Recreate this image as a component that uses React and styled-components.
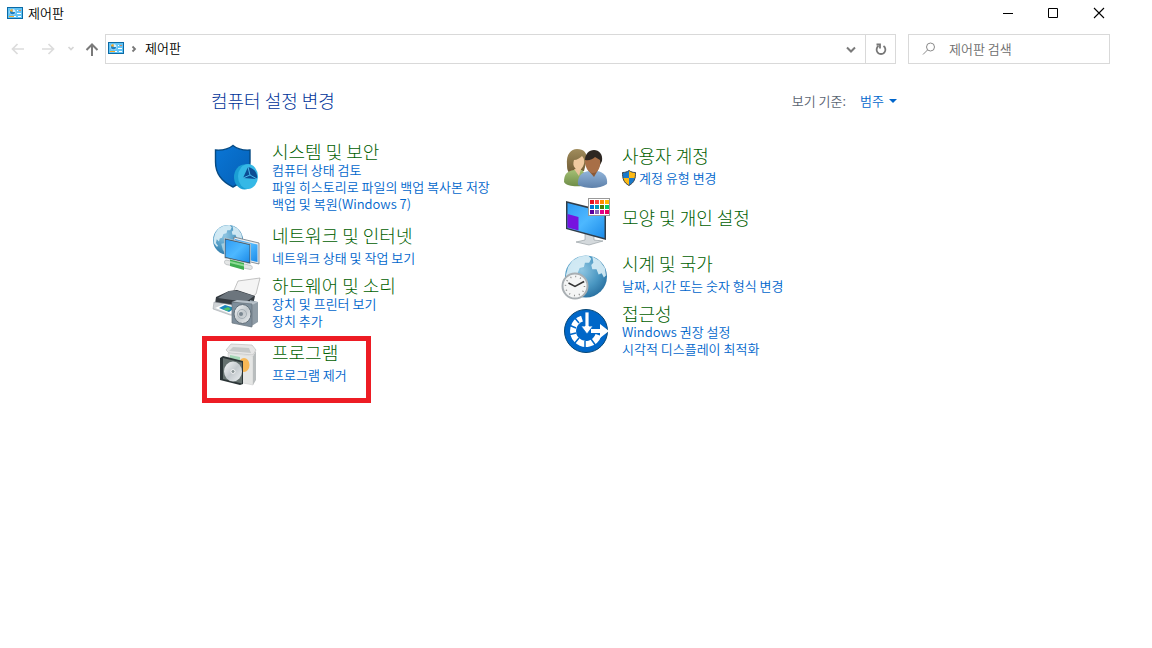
import styled, { createGlobalStyle } from "styled-components";

const GlobalStyle = createGlobalStyle`
	* {
		box-sizing: border-box;
	}
	body {
		margin: 0;
		background: #fff;
	}
	body, button, input, select {
		font-family: "Noto Sans CJK KR", "Noto Sans", sans-serif;
		font-size: 13px;
		font-weight: 350;
	}
`;

const Window = styled.div`
	min-height: 100vh;
	padding-right: 30px;
	color: #000;
`;
const TitleBar = styled.header`
	display: flex;
	align-items: center;
	height: 26px;
	padding-left: 7px;
	gap: 5px;
`;
const Title = styled.h1`
	flex: 1;
	margin: 0;
	font-size: 13px;
	font-weight: 350;
	line-height: 20px;
`;
const WindowControls = styled.div`
	display: flex;
`;
const PlainButton = styled.button`
	display: flex;
	align-items: center;
	justify-content: center;
	padding: 0;
	border: 0;
	background: none;
	width: ${(props) => props.$width}px;
	height: 26px;
`;
const Toolbar = styled.nav`
	display: flex;
	align-items: center;
	margin-top: 8px;
	padding: 0 12px 0 3px;
	height: 30px;
`;
const AddressBar = styled.div`
	display: flex;
	align-items: center;
	flex: 1;
	height: 30px;
	margin-right: 12px;
	padding-left: 2px;
	border: 1px solid #d9d9d9;
`;
const AddressIcon = styled.span`
	display: flex;
	padding-bottom: 2px;
`;
const Crumb = styled.a`
	flex: 1;
	padding-bottom: 2px;
	color: #000;
	line-height: 20px;
	text-decoration: none;
`;
const Refresh = styled(PlainButton)`
	height: 28px;
	border-left: 1px solid #d9d9d9;
`;
const SearchBox = styled.label`
	display: flex;
	align-items: center;
	width: 202px;
	height: 30px;
	padding: 0 12px;
	gap: 12px;
	border: 1px solid #d9d9d9;
`;
const SearchInput = styled.input`
	flex: 1;
	min-width: 0;
	height: 24px;
	padding: 0 0 2px;
	border: 0;
	outline: 0;
	background: none;
	&::placeholder {
		color: #6d6d6d;
		opacity: 1;
	}
`;
const Content = styled.main`
	max-width: 897px;
	padding: 23px 0 24px 211px;
`;
const ContentHeader = styled.div`
	display: flex;
	align-items: center;
	justify-content: space-between;
	height: 28px;
`;
const PageHeading = styled.h2`
	margin: 0;
	padding-bottom: 2px;
	color: #003399;
	font-size: 18px;
	font-weight: 300;
	line-height: 26px;
`;
const ViewBy = styled.label`
	display: flex;
	align-items: center;
	gap: 14px;
	color: #5a6472;
	line-height: 20px;
`;
const SelectWrap = styled.span`
	display: flex;
	align-items: center;
	gap: 5px;
`;
const ViewSelect = styled.select`
	appearance: none;
	padding: 0;
	border: 0;
	background: none;
	color: #0066cc;
	line-height: 20px;
`;
const Columns = styled.div`
	display: grid;
	grid-template-columns: 350fr 335fr;
	align-items: start;
	margin: 26px 0 0 1px;
`;
const Column = styled.div`
	display: grid;
	gap: 9px;
`;
const Category = styled.section`
	position: relative;
	display: flex;
	gap: 12px;
`;
const Picture = styled.svg`
	flex: none;
	width: 48px;
	height: 48px;
	margin-bottom: -3px;
	overflow: visible;
`;
const paddings = { none: 12, one: 4, many: 0 };
const CategoryBody = styled.div`
	display: flex;
	flex-direction: column;
	padding-top: ${(props) => paddings[props.$links]}px;
`;
const CategoryHeading = styled.h3`
	margin: 0;
	font-weight: 300;
	padding-bottom: ${(props) => (props.$links === "one" ? 4 : 0)}px;
`;
const CategoryLink = styled.a`
	display: block;
	color: #006000;
	font-size: 18px;
	line-height: 20px;
	text-decoration: none;
	white-space: nowrap;
`;
const TaskLink = styled.a`
	display: flex;
	align-items: center;
	gap: 3px;
	color: #0066cc;
	line-height: 17px;
	text-decoration: none;
	white-space: nowrap;
`;
const Highlight = styled.span`
	position: absolute;
	top: -2px;
	left: -10px;
	width: 169px;
	height: 67px;
	border: 5px solid #ed1c24;
	pointer-events: none;
`;

const PanelIcon = () => (
	<svg width="16" height="12" viewBox="0 0 16 12" aria-hidden="true">
		<rect x=".5" y=".5" width="15" height="11" fill="#63c3f4" stroke="#0b6aa5" />
		<circle cx="5.500" cy="5" r="3" fill="#d5effd" />
		<path d="M5.500 5V2.500a2.500 2.500 0 1 0 2.500 2.500z" fill="#1a7fc4" />
		<path d="M5.500 5V2A3 3 0 0 0 2.800 4z" fill="#f7a823" />
		<path d="M10 3.500h1M10 6.500h4M7 9.500h2M11 9.500h3" stroke="#fff" />
		<path d="M12 3.500h2" stroke="#d98a5b" />
		<path d="M2 9.500h5" stroke="#f7a823" />
	</svg>
);

const Glyph = ({ d, color, stroke = 1.7 }) => (
	<svg width="14" height="14" viewBox="0 0 14 14" fill="none" stroke={color} strokeWidth={stroke} aria-hidden="true">
		<path d={d} />
	</svg>
);

const Globe = ({ cx, cy, r }) => (
	<g transform={`translate(${cx} ${cy}) scale(${r / 20})`}>
		<circle r="20" fill="url(#globe)" />
		<path d="M-13-15l7-4 8-1 3 3-2 4-4 0-1 4-4 1-2 5-3 1-1 4-3-3-1 5 3 4-2 1-4-5 0-6 2-7z" fill="#dceff7" opacity=".9" />
		<path d="M6-19l7 4 5 7 1 7-2 2-2-4-3 1-2-5-4 0-1-4 2-2z" fill="#dceff7" opacity=".9" />
		<path d="M-9 5l5-1 6 4-2 5-4 5-3-5z" fill="#bcdfee" opacity=".7" />
	</g>
);

const Shield = () => (
	<svg width="14" height="16" viewBox="0 0 14 16" aria-hidden="true">
		<path d="M7 .5C5 2 3 2.500.5 2.500c0 6 1 10 6.500 13 5.500-3 6.500-7 6.500-13C11 2.500 9 2 7 .5z" fill="#1979ca" />
		<path d="M7 .5C9 2 11 2.500 13.500 2.500V8H7zM7 8H.8c.8 4 2.700 6 6.200 7.500z" fill="#fdb913" />
		<path d="M7 .5C5 2 3 2.500.5 2.500c0 6 1 10 6.500 13 5.500-3 6.500-7 6.500-13C11 2.500 9 2 7 .5z" fill="none" stroke="#3d4854" />
	</svg>
);

const Defs = () => (
	<svg width="0" height="0" display="block" aria-hidden="true">
		<defs>
			<radialGradient id="globe" cx=".4" cy=".35" r=".7">
				<stop offset="0" stopColor="#8fc6e2" />
				<stop offset=".6" stopColor="#4a97c2" />
				<stop offset="1" stopColor="#286f9f" />
			</radialGradient>
			<linearGradient id="screen" x1="0" y1="0" x2="1" y2="1">
				<stop offset="0" stopColor="#2f9bf4" />
				<stop offset=".5" stopColor="#4db8ff" />
				<stop offset="1" stopColor="#1b8ae8" />
			</linearGradient>
			<linearGradient id="shield" x1="0" y1="0" x2="1" y2="1">
				<stop offset="0" stopColor="#0a76d6" />
				<stop offset="1" stopColor="#0560b6" />
			</linearGradient>
			<linearGradient id="metal" x1="0" y1="0" x2="1" y2="1">
				<stop offset="0" stopColor="#f8f9fa" />
				<stop offset=".5" stopColor="#c3c9cd" />
				<stop offset="1" stopColor="#eceff1" />
			</linearGradient>
			<linearGradient id="hair" x1="0" y1="0" x2="0" y2="1">
				<stop offset="0" stopColor="#a08c5c" />
				<stop offset="1" stopColor="#6d5832" />
			</linearGradient>
			<linearGradient id="green" x1="0" y1="0" x2="0" y2="1">
				<stop offset="0" stopColor="#a3bf74" />
				<stop offset="1" stopColor="#6f8d48" />
			</linearGradient>
			<linearGradient id="blue" x1="0" y1="0" x2="0" y2="1">
				<stop offset="0" stopColor="#92b5da" />
				<stop offset="1" stopColor="#5e81ab" />
			</linearGradient>
		</defs>
	</svg>
);

const palette = [
	"#e81123", "#ff4343", "#ff8c00", "#ffb900",
	"#0078d7", "#0099bc", "#498205", "#00cc6a",
	"#5b009f", "#8764b8", "#e3008c", "#ea005e",
];

const pictures = {
	security: (
		<>
			<path d="M21 3.500c-5 4-11 5-17.500 4.500v12c0 12 7 20 17.500 25 10-5 17-13 17-25V8c-7 .5-12-.5-17-4.500z" fill="url(#shield)" stroke="#064a83" strokeWidth="1.400" />
			<ellipse cx="32.500" cy="35" rx="10.500" ry="12.500" fill="#1b9fd4" />
			<ellipse cx="36" cy="34.500" rx="10" ry="12.500" fill="#35b8e6" />
			<path d="M36 25l-5 11 14 1c1-6-3-11-9-12z" fill="#0c4c94" />
			<path d="M36 25l2 8 7 4M31 36l7-3" stroke="#48b9ec" fill="none" />
		</>
	),
	network: (
		<>
			<Globe cx={16} cy={18} r={15} />
			<path d="M22 15l25 6v21l-25-6z" fill="#e9edf0" stroke="#697680" strokeWidth=".8" />
			<path d="M23 17l22.500 5.500V40L23 34.500z" fill="url(#screen)" />
			<path d="M12.500 16l26 6v20l-26-6z" fill="#45525e" stroke="#d9dfe3" strokeWidth=".6" />
			<path d="M13.500 17.500l24 5.500v17.500l-24-5.500z" fill="url(#screen)" />
			<path d="M14 38l25 5.500c2 1 1.500 4-.5 4L14 42.500c-2-1-2-4 0-4.500z" fill="#e4e6e6" stroke="#a4aaad" strokeWidth=".6" />
			<path d="M18 37.500l14 3.500v7l-14-4z" fill="#3fae50" />
			<path d="M18 39l14 3.500v2l-14-3.500z" fill="#8edb94" />
		</>
	),
	hardware: (
		<g transform="translate(0 1)">
			<path d="M26 4l22-3-4 16-5 4-19-3z" fill="#f4f4f4" stroke="#aaa" strokeWidth=".7" />
			<path d="M4 20l13-6 8-1 18 6-3 13-37-5z" fill="#343a40" />
			<path d="M17 14l9 0 16 5-8 6-28-4z" fill="#6c757d" />
			<path d="M2 25l32 5v10l-16-2-17-6z" fill="#cfd3d6" stroke="#969da3" strokeWidth=".5" />
			<path d="M3 31l9-4 14 3-7 7z" fill="#fff" />
			<path d="M7 31l6-3 10 3-6 4z" fill="#1b86bf" />
			<path d="M11 32l5-2 3 2-4 2z" fill="#50c26a" />
			<path d="M38 23l8 2v20l-8 5z" fill="#8f9ca6" />
			<path d="M20 25l5-2 21 2-6 3z" fill="#b7c1c9" />
			<path d="M20 25l20 2v23l-20-4z" fill="#7e8e9b" stroke="#68747d" strokeWidth=".7" />
			<ellipse cx="30.500" cy="37" rx="8.500" ry="9.500" fill="url(#metal)" stroke="#5f6c76" />
			<circle cx="30" cy="37" r="4.500" fill="none" stroke="#a6afb5" />
			<circle cx="29" cy="37" r="2" fill="#7a8790" />
		</g>
	),
	programs: (
		<g transform="translate(0 2)">
			<path d="M14 9l5-6 21 1 4 5-3 5-24-2z" fill="#e6e6e6" stroke="#b5b5b5" strokeWidth=".6" />
			<path d="M17 10l4-4 16 1 2 5z" fill="#c6c9c9" />
			<path d="M16 12l25 3v29l-25-5z" fill="#e5e6e5" stroke="#c8caca" strokeWidth=".5" />
			<path d="M41 15l3-5v29l-3 5z" fill="#b9bdbe" />
			<path d="M18 14l10 2v20l-10-3z" fill="#a6d8b7" />
			<ellipse cx="32" cy="24" rx="5.500" ry="7" fill="#f8b856" />
			<path d="M8 17l3-2 20 5v23l-3 1-20-5z" fill="#2b3436" />
			<path d="M11 17l19 4.500v21L11 38z" fill="#65716f" />
			<ellipse cx="21" cy="30.500" rx="9" ry="10" fill="url(#metal)" />
			<circle cx="21" cy="30.500" r="2" fill="#8d9799" stroke="#fff" strokeWidth=".8" />
		</g>
	),
	users: (
		<>
			<path d="M5 23C4 12 9 7 15 7c7 0 10 4 10 10l-3 12-12 3c-4-1-5-4-5-9z" fill="url(#hair)" />
			<path d="M2 40c0-8 3-11 10-12h8l4 5-4 11c-7 1-16 0-18-4z" fill="url(#green)" />
			<path d="M12 27l7 0-2 7z" fill="#e9c39b" />
			<path d="M12 18c3 0 6-2 8-4 3 3 3 8 0 12-2 3-5 3-7 0-2-2-2-5-1-8z" fill="#efc9a0" />
			<path d="M16 43c-1-9 4-13 11-14h8c7 1 11 6 10 13-7 5-21 5-29 1z" fill="url(#blue)" />
			<path d="M26 28h10l-4 7z" fill="#8c5a37" />
			<path d="M23 18c0-6 4-10 9-10s9 4 8 11l-3 6-11-5z" fill="#2d2722" />
			<path d="M23 18c4 1 8-1 10-3l5 3c1 7-2 13-7 13-5 0-8-6-8-13z" fill="#a86f47" />
		</>
	),
	appearance: (
		<g transform="translate(1 0)">
			<path d="M22 36l9 2v6l9 1-14 4-13-3 9-2z" fill="#d4d9dc" stroke="#8c959b" strokeWidth=".6" />
			<path d="M3 5l40 10v29L3 33z" fill="#303d49" />
			<path d="M4.500 7l37 9.500V42l-37-10z" fill="url(#screen)" />
			<path d="M4.500 18l11 3v13.500l-11-3z" fill="#7614df" />
			<rect x="25.500" y="2.500" width="21" height="17" fill="#fff" stroke="#999" />
			{palette.map((color, i) => (
				<rect key={color} x={27 + (i % 4) * 5} y={4 + Math.floor(i / 4) * 5} width="4" height="4" fill={color} />
			))}
		</g>
	),
	clock: (
		<>
			<Globe cx={24} cy={26.5} r={21} />
			<circle cx="13" cy="36" r="12.500" fill="#f4f5f5" stroke="#a9afb3" strokeWidth="2" />
			<circle cx="13" cy="36" r="9.500" fill="none" stroke="#888" strokeWidth="1.500" strokeDasharray="1 3.970" />
			<path d="M6.500 33l6.500 3.500 9-5" fill="none" stroke="#333" strokeWidth="1.500" />
		</>
	),
	access: (
		<>
			<circle cx="24" cy="27" r="21.500" fill="#0067c8" stroke="#064777" />
			<path d="M20 14.600a13 13 0 1 0 16.400 16.400" fill="none" stroke="#fff" strokeWidth="6" />
			<path d="M17 19l-5-6M14 24L7 21M14 29l-8 2M17 34l-5 6M23 37v8M29 35l5 7" stroke="#0067c8" strokeWidth="1.500" />
			<path d="M23 8h4v14h4l-6 8-6-8h4z" fill="#fff" stroke="#0067c8" strokeWidth=".8" />
			<path d="M29 25h9v-5l9 7-9 7v-5h-9z" fill="#fff" />
		</>
	),
};

const left = [
	{ title: "시스템 및 보안", picture: "security", tasks: ["컴퓨터 상태 검토", "파일 히스토리로 파일의 백업 복사본 저장", "백업 및 복원(Windows 7)"] },
	{ title: "네트워크 및 인터넷", picture: "network", tasks: ["네트워크 상태 및 작업 보기"] },
	{ title: "하드웨어 및 소리", picture: "hardware", tasks: ["장치 및 프린터 보기", "장치 추가"] },
	{ title: "프로그램", picture: "programs", tasks: ["프로그램 제거"], highlighted: true },
];
const right = [
	{ title: "사용자 계정", picture: "users", tasks: ["계정 유형 변경"], shield: true },
	{ title: "모양 및 개인 설정", picture: "appearance", tasks: [] },
	{ title: "시계 및 국가", picture: "clock", tasks: ["날짜, 시간 또는 숫자 형식 변경"] },
	{ title: "접근성", picture: "access", tasks: ["Windows 권장 설정", "시각적 디스플레이 최적화"] },
];

const CategoryItem = ({ title, picture, tasks, shield, highlighted }) => {
	const links = ["none", "one"][tasks.length] || "many";
	return (
		<Category>
			<Picture viewBox="0 -1 48 48" aria-hidden="true">
				{pictures[picture]}
			</Picture>
			<CategoryBody $links={links}>
				<CategoryHeading $links={links}>
					<CategoryLink href="#">{title}</CategoryLink>
				</CategoryHeading>
				{tasks.map((task) => (
					<TaskLink href="#" key={task}>
						{shield && <Shield />}
						{task}
					</TaskLink>
				))}
			</CategoryBody>
			{highlighted && <Highlight />}
		</Category>
	);
};

const App = () => {
	return (
		<Window>
			<GlobalStyle />
			<Defs />
			<TitleBar>
				<PanelIcon />
				<Title>제어판</Title>
				<WindowControls>
					<PlainButton $width={46} aria-label="최소화">
						<Glyph color="#000" stroke={1} d="M3 7.500h10" />
					</PlainButton>
					<PlainButton $width={46} aria-label="최대화">
						<Glyph color="#000" stroke={1} d="M2.500 2.500h9v9h-9z" />
					</PlainButton>
					<PlainButton $width={46} aria-label="닫기">
						<Glyph color="#000" stroke={1.1} d="M2 2l10 10M12 2L2 12" />
					</PlainButton>
				</WindowControls>
			</TitleBar>
			<Toolbar>
				<PlainButton $width={30} aria-label="뒤로">
					<Glyph color="#dcdcdc" d="M13 7H2M6.500 2L1.500 7l5 5" />
				</PlainButton>
				<PlainButton $width={30} aria-label="앞으로">
					<Glyph color="#dcdcdc" d="M1 7h11M7.500 2l5 5-5 5" />
				</PlainButton>
				<PlainButton $width={16} aria-label="최근 위치">
					<Glyph color="#d6d6d6" d="M4.500 5L7 7.500 9.500 5" />
				</PlainButton>
				<PlainButton $width={26} aria-label="위로">
					<Glyph color="#7a7a7a" stroke={2} d="M7 14V3M1.500 8L7 2.500 12.500 8" />
				</PlainButton>
				<AddressBar>
					<AddressIcon>
						<PanelIcon />
					</AddressIcon>
					<PlainButton $width={21} aria-label="하위 항목">
						<Glyph color="#777" stroke={1.8} d="M4.500 4.500L7 7 4.500 9.500" />
					</PlainButton>
					<Crumb href="#">제어판</Crumb>
					<PlainButton $width={28} aria-label="이전 위치">
						<Glyph color="#7a7a7a" stroke={2} d="M3 5.500l4 4 4-4" />
					</PlainButton>
					<Refresh $width={30} aria-label="새로 고침">
						<Glyph color="#777" stroke={1.8} d="M9.500 4a4.400 4.400 0 1 1-5 0M2.500 2.500H6V6.500" />
					</Refresh>
				</AddressBar>
				<SearchBox>
					<svg width="16" height="16" viewBox="0 0 16 16" fill="none" stroke="#8a8a8a" aria-hidden="true">
						<circle cx="9.500" cy="6" r="4" />
						<path d="M6.500 9L2 13.500" />
					</svg>
					<SearchInput placeholder="제어판 검색" aria-label="제어판 검색" />
				</SearchBox>
			</Toolbar>
			<Content>
				<ContentHeader>
					<PageHeading>컴퓨터 설정 변경</PageHeading>
					<ViewBy>
						보기 기준:
						<SelectWrap>
							<ViewSelect>
								<option>범주</option>
							</ViewSelect>
							<svg width="8" height="4" viewBox="0 0 8 4" aria-hidden="true">
								<path d="M0 0h8L4 4z" fill="#0066cc" />
							</svg>
						</SelectWrap>
					</ViewBy>
				</ContentHeader>
				<Columns>
					<Column>
						{left.map((item) => (
							<CategoryItem key={item.title} {...item} />
						))}
					</Column>
					<Column>
						{right.map((item) => (
							<CategoryItem key={item.title} {...item} />
						))}
					</Column>
				</Columns>
			</Content>
		</Window>
	);
};
export default App;
